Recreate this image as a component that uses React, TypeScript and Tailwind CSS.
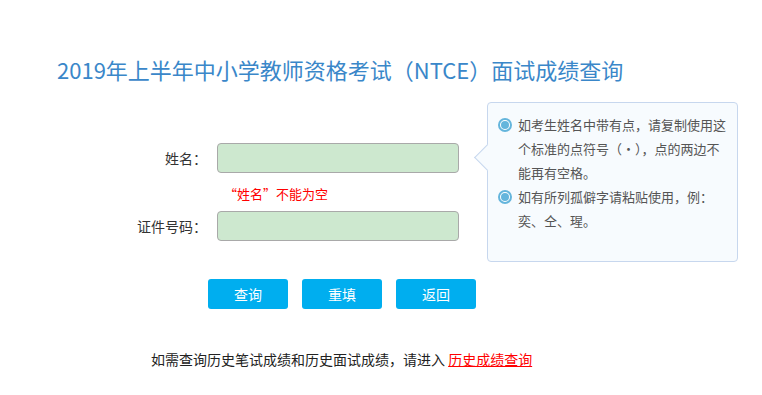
import React from 'react';

const font = 'font-["Microsoft_YaHei","Noto_Sans_CJK_SC",sans-serif]';

function Radio() {
  return (
    <span className="mt-[5px] flex h-[14px] w-[14px] shrink-0 items-center justify-center rounded-full border-2 border-[#64b5dc] bg-white">
      <span className="h-[8px] w-[8px] rounded-full bg-[#64b5dc]" />
    </span>
  );
}

function Tip() {
  return (
    <div className="absolute left-[487px] top-[-41px] h-[160px] w-[251px] rounded-[4px] border border-[#c7d7ee] bg-[#f7fbfe]">
      {/* arrow */}
      <span className="absolute left-[-10px] top-[45px] h-[19px] w-[19px] rotate-45 border-b border-l border-[#c7d7ee] bg-[#f7fbfe]" />
      <div className="relative flex flex-col pl-[10px] pt-[10px] text-[13px] leading-[24px] text-[#555]">
        <div className="flex gap-[6px]">
          <Radio />
          <p>
            如考生姓名中带有点，请复制使用这
            <br />
            个标准的点符号（·），点的两边不
            <br />
            能再有空格。
          </p>
        </div>
        <div className="flex gap-[6px]">
          <Radio />
          <p>
            如有所列孤僻字请粘贴使用，例：
            <br />
            奕、仝、瑆。
          </p>
        </div>
      </div>
    </div>
  );
}

export default function App() {
  return (
    <div className={`h-[395px] w-[762px] overflow-hidden bg-white ${font}`}>
      <h1 className="pl-[57px] pt-[55px] text-[22px] leading-[28px] text-[#3a87c9]">
        2019年上半年中小学教师资格考试（NTCE）面试成绩查询
      </h1>

      <div className="relative mt-[60px]">
        <div className="flex items-center">
          <label className="w-[207px] text-right text-[14px] text-[#333]">姓名：</label>
          <div className="ml-[10px] h-[30px] w-[242px] rounded-[4px] border border-[#a9a9a9] bg-[#cde8cf]" />
        </div>
        <div className="mt-[11px] pl-[224px] text-[13px] leading-[20px] text-[#ff0000]">“姓名”不能为空</div>
        <div className="mt-[7px] flex items-center">
          <label className="w-[207px] text-right text-[14px] text-[#333]">证件号码：</label>
          <div className="ml-[10px] h-[30px] w-[242px] rounded-[4px] border border-[#a9a9a9] bg-[#cde8cf]" />
        </div>
        <Tip />
      </div>

      <div className="mt-[38px] flex gap-[14px] pl-[208px]">
        {['查询', '重填', '返回'].map((t) => (
          <button key={t} className="h-[30px] w-[80px] rounded-[3px] bg-[#00aeef] text-[14px] text-white">
            {t}
          </button>
        ))}
      </div>

      <p className="mt-[40px] pl-[151px] text-[14px] leading-[20px] text-[#222]">
        如需查询历史笔试成绩和历史面试成绩，请进入{' '}
        <a href="#" className="text-[#ff0000] underline">历史成绩查询</a>
      </p>
    </div>
  );
}
